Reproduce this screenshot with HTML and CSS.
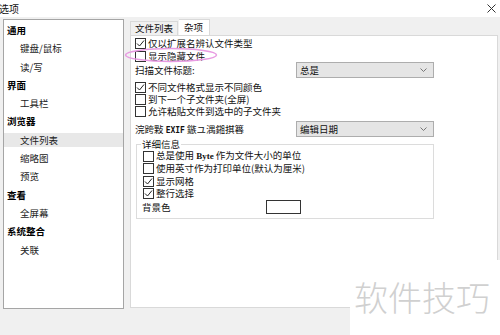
FILE: index.html
```html
<!DOCTYPE html>
<html lang="zh">
<head>
<meta charset="utf-8">
<title>选项</title>
<link rel="stylesheet" href="styles.css">
</head>
<body>
<div class="window">
  <div class="titlebar">
    <span class="title">选项</span>
    <svg class="close" width="9" height="9" viewBox="0 0 9 9"><path d="M0.5 0.5 L8.5 8.5 M8.5 0.5 L0.5 8.5" stroke="#333" stroke-width="1" fill="none"/></svg>
  </div>
  <div class="main">
    <ul class="tree">
      <li class="node head">通用</li>
      <li class="node child">键盘/鼠标</li>
      <li class="node child">读/写</li>
      <li class="node head">界面</li>
      <li class="node child">工具栏</li>
      <li class="node head">浏览器</li>
      <li class="node child selected">文件列表</li>
      <li class="node child">缩略图</li>
      <li class="node child">预览</li>
      <li class="node head">查看</li>
      <li class="node child">全屏幕</li>
      <li class="node head">系统整合</li>
      <li class="node child">关联</li>
    </ul>
    <div class="right">
      <div class="tabs">
        <div class="tab">文件列表</div>
        <div class="tab active">杂项</div>
      </div>
      <div class="panel">
        <div class="content">
          <div class="check tall"><span class="box"><svg width="9" height="9" viewBox="0 0 9 9"><path d="M1 4.5 L3.5 7 L8 1.5" stroke="#222" stroke-width="1" fill="none"/></svg></span><span class="lbl">仅以扩展名辨认文件类型</span></div>
          <div class="check mark-row"><span class="box"></span><span class="lbl">显示隐藏文件</span>
            <svg class="ellipse" width="94" height="16" viewBox="0 0 94 16"><ellipse cx="47" cy="8" rx="45.5" ry="6.5" stroke="#e89be2" stroke-width="1.5" fill="none"/></svg>
          </div>
          <div class="field">
            <span>扫描文件标题:</span>
            <div class="select"><span>总是</span><svg width="7" height="4" viewBox="0 0 7 4"><path d="M0.5 0.5 L3.5 3.5 L6.5 0.5" stroke="#777" fill="none"/></svg></div>
          </div>
          <div class="check first"><span class="box"><svg width="9" height="9" viewBox="0 0 9 9"><path d="M1 4.5 L3.5 7 L8 1.5" stroke="#222" stroke-width="1" fill="none"/></svg></span><span class="lbl">不同文件格式显示不同颜色</span></div>
          <div class="check"><span class="box"></span><span class="lbl">到下一个子文件夹(全屏)</span></div>
          <div class="check"><span class="box"></span><span class="lbl">允许粘贴文件到选中的子文件夹</span></div>
          <div class="field second">
            <span class="garbled">浣跨敤 <span class="mono">EXIF</span> 鏃ユ湡鎺掑簭</span>
            <div class="select"><span>编辑日期</span><svg width="7" height="4" viewBox="0 0 7 4"><path d="M0.5 0.5 L3.5 3.5 L6.5 0.5" stroke="#777" fill="none"/></svg></div>
          </div>
          <fieldset class="group">
            <legend>详细信息</legend>
            <div class="check g"><span class="box"></span><span class="lbl">总是使用 <span class="byte">Byte</span> 作为文件大小的单位</span></div>
            <div class="check g"><span class="box"></span><span class="lbl">使用英寸作为打印单位(默认为厘米)</span></div>
            <div class="check g"><span class="box"><svg width="9" height="9" viewBox="0 0 9 9"><path d="M1 4.5 L3.5 7 L8 1.5" stroke="#222" stroke-width="1" fill="none"/></svg></span><span class="lbl">显示网格</span></div>
            <div class="check g"><span class="box"><svg width="9" height="9" viewBox="0 0 9 9"><path d="M1 4.5 L3.5 7 L8 1.5" stroke="#222" stroke-width="1" fill="none"/></svg></span><span class="lbl">整行选择</span></div>
            <div class="color-row"><span class="color-label">背景色</span><span class="swatch"></span></div>
          </fieldset>
        </div>
      </div>
    </div>
  </div>
  <div class="watermark">软件技巧</div>
</div>
</body>
</html>
```
FILE: styles.css
```css
* { box-sizing: border-box; }
html, body { margin: 0; padding: 0; }
body {
  font-family: "Noto Sans CJK SC", "Noto Sans", sans-serif;
  font-size: 9.5px;
  color: #111;
  background: #f0f0f0;
}
.window {
  width: 500px;
  height: 335px;
  position: relative;
  overflow: hidden;
  background: #f0f0f0;
}
.titlebar {
  height: 17px;
  background: #fff;
  display: flex;
  align-items: center;
  justify-content: space-between;
  padding-right: 4px;
}
.title { font-size: 10px; line-height: 12px; margin-left: -1px; }
.main {
  display: flex;
  gap: 6px;
  padding: 2px 0 0 3px;
}
.tree {
  width: 121px;
  height: 290px;
  margin: 0;
  padding: 3px 0 0 0;
  list-style: none;
  background: #fff;
  border: 1px solid #a5a5a5;
}
.node {
  height: 14px;
  line-height: 14px;
  margin-bottom: 4.3px;
  white-space: nowrap;
}
.head { font-weight: bold; padding-left: 3px; color: #000; }
.child { padding-left: 16px; color: #222; }
.selected { background: #e8e8e8; }
.right {
  width: 368px;
  display: flex;
  flex-direction: column;
}
.tabs {
  display: flex;
  align-items: flex-end;
  height: 16px;
}
.tab {
  height: 14px;
  line-height: 13px;
  padding: 0 4px;
  border: 1px solid #d9d9d9;
  border-bottom: none;
  background: #f0f0f0;
}
.tab.active {
  height: 16px;
  line-height: 15px;
  padding: 0 6px 0 5px;
  background: #fff;
  border-left: none;
  margin-left: 1px;
}
.panel {
  height: 273px;
  background: #fff;
  border: 1px solid #d9d9d9;
}
.content {
  width: 303px;
  padding: 1px 0 0 4px;
}
.check {
  position: relative;
  display: flex;
  align-items: center;
  height: 12px;
  line-height: 12px;
  white-space: nowrap;
}
.lbl { line-height: 11px; }
.check.tall { height: 13px; }
.check.first { margin-top: 3px; }
.check.g { height: 12.5px; }
.box {
  width: 11px;
  height: 11px;
  border: 1px solid #333;
  background: #fff;
  margin-right: 2px;
  flex: none;
  display: flex;
  align-items: center;
  justify-content: center;
}
.ellipse {
  position: absolute;
  left: -11px;
  top: -3px;
}
.field {
  display: flex;
  align-items: center;
  justify-content: space-between;
  height: 16px;
}
.field.second { margin-top: 4px; }
.select {
  width: 138px;
  height: 16px;
  border: 1px solid #adadad;
  background: #e5e5e5;
  display: flex;
  align-items: center;
  justify-content: space-between;
  padding: 0 6px 0 3px;
  line-height: 14px;
}
.mono { font-family: "DejaVu Sans Mono", monospace; font-size: 8px; font-weight: bold; }
.byte { font-family: "Liberation Serif", serif; font-size: 9px; font-weight: bold; }
.group {
  margin: 2px 0 0 1px;
  width: 298px;
  padding: 0 0 4px 6px;
  border: 1px solid #dcdcdc;
  min-inline-size: 0;
}
.group legend {
  padding: 0 1px;
  margin-left: -2px;
  line-height: 10px;
  height: 10px;
}
.group legend + .check { margin-top: 1px; }
.color-row {
  display: flex;
  align-items: center;
  height: 14px;
}
.color-label { width: 124px; margin-left: -1px; }
.swatch {
  width: 35px;
  height: 14px;
  border: 1px solid #333;
  background: #fff;
}
.watermark {
  position: absolute;
  left: 350px;
  top: 260px;
  width: 150px;
  height: 75px;
  background: #fff;
  color: #d0d0d0;
  font-size: 34px;
  line-height: 34px;
  padding: 20px 0 0 4px;
  white-space: nowrap;
  font-weight: 300;
}
```
